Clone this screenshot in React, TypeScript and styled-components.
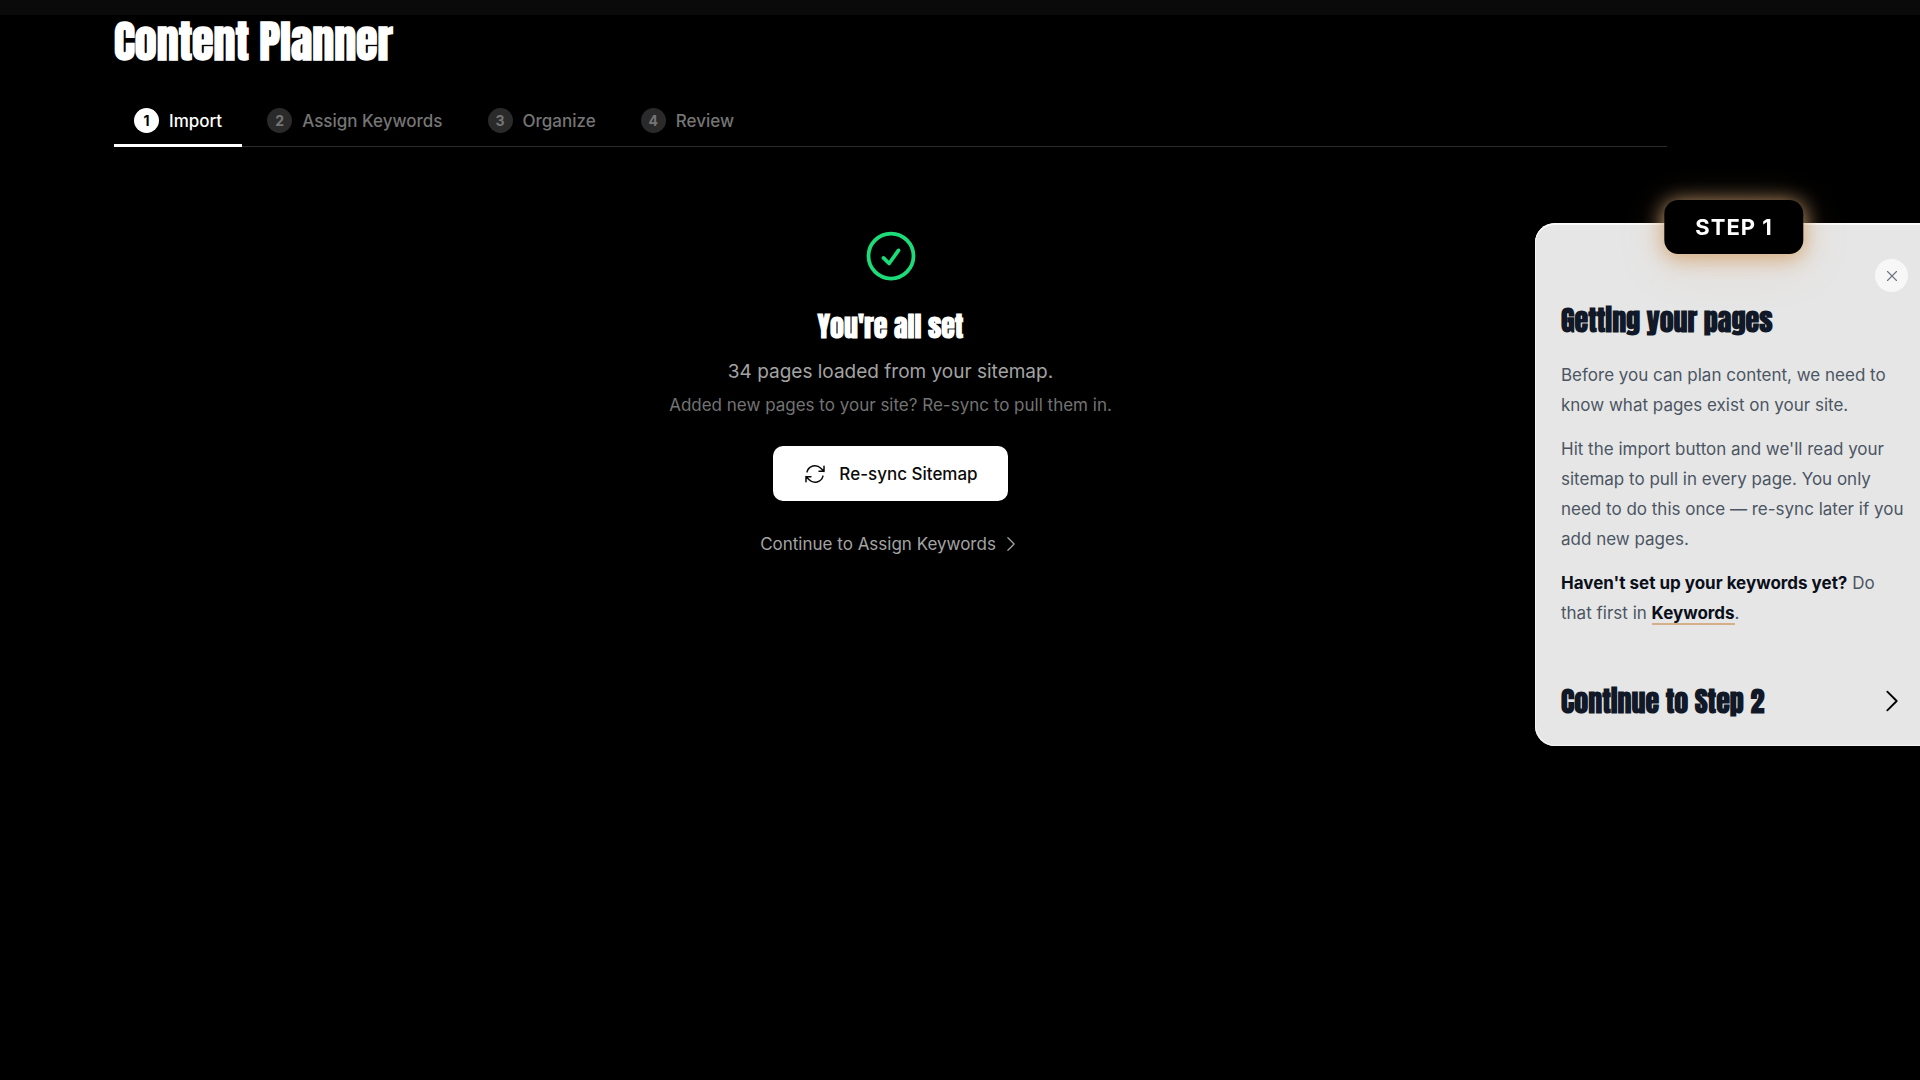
import React, { useState } from 'react';
import styled, { createGlobalStyle } from 'styled-components';
import {
  HiOutlineArrowPath,
  HiOutlineCheckCircle,
  HiOutlineChevronRight,
  HiOutlineXMark,
} from 'react-icons/hi2';

const display = `Impact, Anton, "Liberation Sans Narrow", "Roboto Condensed", "Liberation Sans", sans-serif`;

const GlobalStyle = createGlobalStyle`
  *, *::before, *::after { box-sizing: border-box; }
  body {
    margin: 0;
    background: #000;
    color: #fff;
    font-family: Inter, "Liberation Sans", sans-serif;
    font-size: 17px;
    overflow-x: hidden;
    -webkit-font-smoothing: antialiased;
  }
  h1, h2, p { margin: 0; }
  button { font: inherit; color: inherit; border: 0; padding: 0; background: none; cursor: pointer; }
`;

const TopStrip = styled.div`
  height: 15px;
  background: #0a0a0a;
`;

const Page = styled.main`
  padding: 0 253px 0 114px;
`;

const Title = styled.h1`
  font: 700 44px/52px ${display};
`;

const Tabs = styled.nav`
  display: flex;
  gap: 5px;
  margin-top: 27px;
  border-bottom: 1px solid #2b2b2b;
`;

const Tab = styled.button<{ $active: boolean }>`
  display: flex;
  align-items: center;
  gap: 10px;
  height: 53px;
  padding: 3px 20px 0;
  margin-bottom: -1px;
  border-bottom: 3px solid ${(p) => (p.$active ? '#fff' : 'transparent')};
  color: ${(p) => (p.$active ? '#fff' : '#757575')};
  font-weight: 500;
`;

const TabNumber = styled.span<{ $active: boolean }>`
  display: grid;
  place-items: center;
  width: 25px;
  height: 25px;
  border-radius: 50%;
  background: ${(p) => (p.$active ? '#fff' : '#2a2a2a')};
  color: ${(p) => (p.$active ? '#000' : '#757575')};
  font-size: 14px;
  font-weight: 700;
`;

const Status = styled.section`
  display: flex;
  flex-direction: column;
  align-items: center;
  padding-top: 79px;
  text-align: center;
`;

const StatusIcon = styled(HiOutlineCheckCircle)`
  width: 60px;
  height: 60px;
  color: #1bdc78;
`;

const StatusTitle = styled.h2`
  margin-top: 22px;
  font: 700 28px/36px ${display};
`;

const Summary = styled.p`
  margin-top: 12px;
  color: #a3a3a3;
  font-size: 19px;
  line-height: 32px;
`;

const Hint = styled.p`
  margin-top: 3px;
  color: #737373;
  line-height: 28px;
`;

const SyncButton = styled.button`
  display: flex;
  align-items: center;
  gap: 12px;
  height: 55px;
  margin-top: 27px;
  padding: 0 30px;
  border-radius: 10px;
  background: #fff;
  color: #0a0a0a;
  font-weight: 500;

  svg { width: 24px; height: 24px; }
`;

const NextLink = styled.a`
  display: flex;
  align-items: center;
  gap: 5px;
  margin-top: 29px;
  color: #a3a3a3;
  line-height: 28px;
  text-decoration: none;

  svg { width: 20px; height: 20px; }
`;

const Guide = styled.aside`
  position: fixed;
  top: 223px;
  right: -13px;
  width: 398px;
  padding: 79px 26px 27px;
  border-radius: 20px 0 0 20px;
  background: #e6e6e6;
  box-shadow: inset 0 2px 0 #fafafa, inset 1px -1px 0 #f4f4f4;
  color: #4b5563;
`;

const StepBadge = styled.div`
  position: absolute;
  top: -23px;
  left: 50%;
  transform: translateX(-50%);
  padding: 0 31px;
  border-radius: 14px;
  background: #000;
  box-shadow: 0 3px 20px 1px rgba(212, 165, 116, 0.95), 0 8px 44px rgba(212, 165, 116, 0.25);
  color: #fff;
  font-size: 22px;
  font-weight: 700;
  line-height: 54px;
  letter-spacing: 1px;
  white-space: nowrap;
`;

const CloseButton = styled.button`
  position: absolute;
  top: 36px;
  right: 25px;
  display: grid;
  place-items: center;
  width: 33px;
  height: 33px;
  border-radius: 50%;
  background: #f7f7f7;
  color: #6b7280;

  svg { width: 18px; height: 18px; }
`;

const GuideTitle = styled.h2`
  color: #111827;
  font: 700 28px/36px ${display};
`;

const GuideText = styled.div`
  display: grid;
  gap: 14px;
  margin-top: 22px;
  line-height: 30px;

  strong { color: #0a0f1a; font-weight: 700; }
`;

const KeywordsLink = styled.a`
  border-bottom: 2px solid #d4b08a;
  color: #0a0f1a;
  font-weight: 700;
  text-decoration: none;
`;

const ContinueButton = styled.button`
  display: flex;
  align-items: center;
  justify-content: space-between;
  width: 100%;
  margin-top: 55px;
  color: #111827;

  span { font: 700 28px/36px ${display}; }

  svg { width: 30px; height: 30px; color: #000; }
`;

const steps = ['Import', 'Assign Keywords', 'Organize', 'Review'];

export default function App() {
  const [active, setActive] = useState(0);
  const [guideOpen, setGuideOpen] = useState(true);

  return (
    <>
      <GlobalStyle />
      <TopStrip />
      <Page>
        <Title>Content Planner</Title>
        <Tabs aria-label="Planner steps">
          {steps.map((label, i) => (
            <Tab key={label} type="button" $active={i === active} onClick={() => setActive(i)}>
              <TabNumber $active={i === active}>{i + 1}</TabNumber>
              {label}
            </Tab>
          ))}
        </Tabs>
        <Status>
          <StatusIcon aria-hidden />
          <StatusTitle>You're all set</StatusTitle>
          <Summary>34 pages loaded from your sitemap.</Summary>
          <Hint>Added new pages to your site? Re-sync to pull them in.</Hint>
          <SyncButton type="button">
            <HiOutlineArrowPath aria-hidden />
            Re-sync Sitemap
          </SyncButton>
          <NextLink href="#assign">
            Continue to Assign Keywords
            <HiOutlineChevronRight aria-hidden />
          </NextLink>
        </Status>
      </Page>
      {guideOpen && (
        <Guide>
          <StepBadge>STEP 1</StepBadge>
          <CloseButton type="button" aria-label="Close" onClick={() => setGuideOpen(false)}>
            <HiOutlineXMark aria-hidden />
          </CloseButton>
          <GuideTitle>Getting your pages</GuideTitle>
          <GuideText>
            <p>Before you can plan content, we need to know what pages exist on your site.</p>
            <p>
              Hit the import button and we'll read your sitemap to pull in every page. You only need
              to do this once — re-sync later if you add new pages.
            </p>
            <p>
              <strong>Haven't set up your keywords yet?</strong> Do that first in{' '}
              <KeywordsLink href="#keywords">Keywords</KeywordsLink>.
            </p>
          </GuideText>
          <ContinueButton type="button" onClick={() => setActive(1)}>
            <span>Continue to Step 2</span>
            <HiOutlineChevronRight aria-hidden />
          </ContinueButton>
        </Guide>
      )}
    </>
  );
}
